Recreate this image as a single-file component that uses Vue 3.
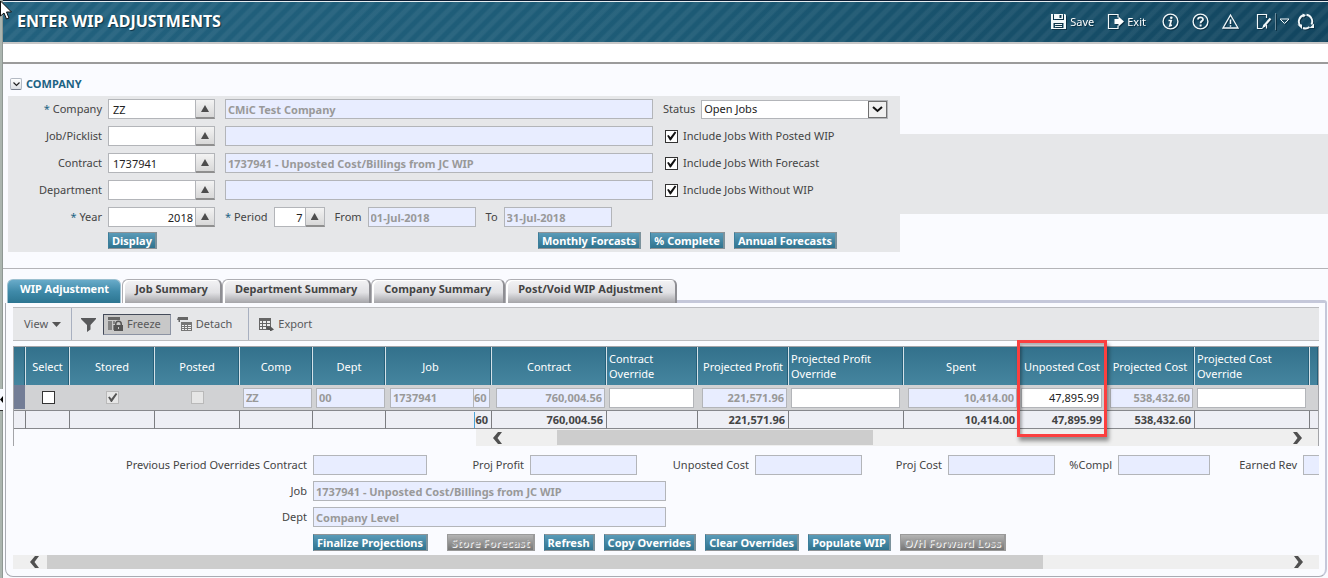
<script setup>
import { ref } from 'vue'

const lookups = [
  { id: 'company', label: 'Company', required: true, value: 'ZZ', text: 'CMiC Test Company' },
  { id: 'job', label: 'Job/Picklist', value: '', text: '' },
  { id: 'contract', label: 'Contract', value: '1737941', text: '1737941 - Unposted Cost/Billings from JC WIP' },
  { id: 'department', label: 'Department', value: '', text: '' },
]
const includes = ref([
  { label: 'Include Jobs With Posted WIP', on: true },
  { label: 'Include Jobs With Forecast', on: true },
  { label: 'Include Jobs Without WIP', on: true },
])
const status = ref('Open Jobs')
const forecastButtons = ['Monthly Forcasts', '% Complete', 'Annual Forecasts']
const tabs = ['WIP Adjustment', 'Job Summary', 'Department Summary', 'Company Summary', 'Post/Void WIP Adjustment']
const activeTab = ref(0)

const columns = [
  { kind: 'handle', title: '', width: 12 },
  { kind: 'check', title: 'Select', width: 44, on: false },
  { kind: 'check', title: 'Stored', width: 85, on: true, locked: true },
  { kind: 'check', title: 'Posted', width: 85, on: false, locked: true },
  { kind: 'text', title: 'Comp', width: 73, value: 'ZZ', locked: true },
  { kind: 'text', title: 'Dept', width: 73, value: '00', locked: true },
  { kind: 'split', title: 'Job', width: 106, value: '1737941', tail: '60', locked: true },
  { kind: 'num', title: 'Contract', width: 115, value: '760,004.56', total: '760,004.56', locked: true },
  { kind: 'num', title: 'Contract Override', width: 91, value: '', wrap: true },
  { kind: 'num', title: 'Projected Profit', width: 91, value: '221,571.96', total: '221,571.96', locked: true },
  { kind: 'num', title: 'Projected Profit Override', width: 115, value: '', wrap: true },
  { kind: 'num', title: 'Spent', width: 115, value: '10,414.00', total: '10,414.00', locked: true },
  { kind: 'num', title: 'Unposted Cost', width: 87, value: '47,895.99', total: '47,895.99', marked: true },
  { kind: 'num', title: 'Projected Cost', width: 89, value: '538,432.60', total: '538,432.60', locked: true },
  { kind: 'num', title: 'Projected Cost Override', width: 115, value: '', wrap: true },
  { kind: 'rest', title: '' },
]

const previous = [
  { id: 'contract', label: 'Previous Period Overrides Contract', lead: 294, width: 114 },
  { id: 'profit', label: 'Proj Profit', lead: 97, width: 107 },
  { id: 'unposted', label: 'Unposted Cost', lead: 112, width: 107 },
  { id: 'cost', label: 'Proj Cost', lead: 80, width: 107 },
  { id: 'compl', label: '%Compl', lead: 57, width: 92 },
  { id: 'rev', label: 'Earned Rev', lead: 87, width: 92 },
]
const actions = [
  { label: 'Finalize Projections', apart: true },
  { label: 'Store Forecast', disabled: true },
  { label: 'Refresh' },
  { label: 'Copy Overrides' },
  { label: 'Clear Overrides' },
  { label: 'Populate WIP' },
  { label: 'O/H Forward Loss', disabled: true },
]
</script>

<template>
  <div class="app">
    <aside class="rail">
      <button class="splitter" aria-label="Expand side panel">
        <svg width="3" height="7" viewBox="0 0 3 7"><path d="M3 0v7L0 3.500z" fill="#000" /></svg>
      </button>
    </aside>
    <div class="page">
      <header class="bar">
        <h1>ENTER WIP ADJUSTMENTS</h1>
        <nav class="tools">
          <button class="tool save">
            <svg width="17" height="17" viewBox="0 0 17 17" fill="#f2f8fa">
              <path fill-rule="evenodd" d="M1 1h2v6h11V1h1l1 1v14H1zM3.500 10v5h10v-5z" />
              <path fill-rule="evenodd" d="M4 1h9v5H4zM9.500 2v3h2V2z" />
              <path d="M5 11h7v1H5zM5 13h7v1H5z" />
            </svg>
            Save
          </button>
          <button class="tool exit">
            <svg width="17" height="17" viewBox="0 0 17 17">
              <path d="M11 4.500V1.500H1.500v14H11v-3" fill="none" stroke="#f2f8fa" stroke-width="1.200" />
              <path d="M7.500 6h4V3.500L17 8.500l-5.500 5V11h-4z" fill="#fff" />
            </svg>
            Exit
          </button>
          <button class="tool info" aria-label="Information">
            <svg width="17" height="17" viewBox="0 0 17 17" fill="none" stroke="#f2f8fa">
              <circle cx="8.500" cy="8.500" r="7.400" stroke-width="1.400" />
              <circle cx="9.300" cy="4.700" r="1.300" fill="#f2f8fa" stroke="none" />
              <path d="M6.500 7.500h2.700l-1.400 5.200 2.200-.6" stroke-width="1.700" />
            </svg>
          </button>
          <button class="tool help" aria-label="Help">
            <svg width="17" height="17" viewBox="0 0 17 17" fill="none" stroke="#f2f8fa">
              <circle cx="8.500" cy="8.500" r="7.400" stroke-width="1.400" />
              <path d="M6 6.500C6 3.700 11 3.700 11 6.400 11 8.200 8.600 8 8.600 10.300" stroke-width="1.800" />
              <path d="M7.600 11.500h2v2h-2z" fill="#f2f8fa" stroke="none" />
            </svg>
          </button>
          <button class="tool warn" aria-label="Warnings">
            <svg width="17" height="17" viewBox="0 0 17 17" fill="none" stroke="#f2f8fa">
              <path d="M8.500 2 16 15H1z" stroke-width="1.300" />
              <path d="M8.500 6.500v4.500M8.500 12.200v1.500" stroke-width="1.500" />
            </svg>
          </button>
          <button class="tool edit" aria-label="Edit">
            <svg width="17" height="17" viewBox="0 0 17 17" fill="none" stroke="#f2f8fa">
              <path d="M11.500 5V1.500h-9v14h5M11.500 12v3.500" stroke-width="1.200" />
              <path d="M15.500 5.500 9 13" stroke-width="2.200" />
              <path d="m8.500 11.500-1.500 4 3.500-2z" fill="#f2f8fa" stroke="none" />
            </svg>
          </button>
          <button class="tool more" aria-label="More edit options">
            <svg width="11" height="7" viewBox="0 0 11 7"><path d="M1 1h9L5.500 5.500z" fill="none" stroke="#f2f8fa" /></svg>
          </button>
          <button class="tool refresh" aria-label="Refresh page">
            <svg width="17" height="17" viewBox="0 0 17 17" fill="none" stroke="#f2f8fa" stroke-width="1.900">
              <path d="M3.500 13A6.800 6.800 0 0 1 7 2M9.500 1.800A6.800 6.800 0 0 1 14.500 11.500M12.500 14A6.800 6.800 0 0 1 6 15" />
              <path d="M.5 11.500H5V16zM17 10.500v4.500h-4.500zM5.500.5 9 2 6.500 4.500z" fill="#f2f8fa" stroke="none" />
            </svg>
          </button>
        </nav>
      </header>
      <div class="subbar"></div>

      <section class="company">
        <h2>
          <button class="disclose" aria-label="Collapse company">
            <svg width="7" height="5" viewBox="0 0 7 5"><path d="m.5.5 3 3 3-3" fill="none" stroke="#222" stroke-width="1.200" /></svg>
          </button>
          COMPANY
        </h2>
        <div class="band">
          <form class="criteria" @submit.prevent>
            <div class="lines">
              <div v-for="(row, i) in lookups" :key="row.id" class="line">
                <label :for="row.id"><i v-if="row.required">*</i> {{ row.label }}</label>
                <div class="picker">
                  <input :id="row.id" type="text" :value="row.value" />
                  <button type="button" :aria-label="'Look up ' + row.label"></button>
                </div>
                <input class="shown" type="text" readonly :value="row.text" :aria-label="row.label + ' name'" />
                <div v-if="i === 0" class="status">
                  <label for="status">Status</label>
                  <div class="drop">
                    <select id="status" v-model="status">
                      <option>Open Jobs</option>
                      <option>All Jobs</option>
                    </select>
                    <span class="arrow">
                      <svg width="11" height="7" viewBox="0 0 11 7"><path d="m1 1 4.500 4L10 1" fill="none" stroke="#111" stroke-width="2" /></svg>
                    </span>
                  </div>
                </div>
                <label v-else class="include">
                  <input v-model="includes[i - 1].on" type="checkbox" />{{ includes[i - 1].label }}
                </label>
              </div>
              <div class="line">
                <label for="year"><i>*</i> Year</label>
                <div class="picker right">
                  <input id="year" type="text" value="2018" />
                  <button type="button" aria-label="Look up Year"></button>
                </div>
                <div class="dates">
                  <label for="period"><i>*</i> Period</label>
                  <div class="picker short right">
                    <input id="period" type="text" value="7" />
                    <button type="button" aria-label="Look up Period"></button>
                  </div>
                  <label for="from" class="gap">From</label>
                  <input id="from" class="shown date" type="text" readonly value="01-Jul-2018" />
                  <label for="to" class="gap">To</label>
                  <input id="to" class="shown date" type="text" readonly value="31-Jul-2018" />
                </div>
              </div>
            </div>
            <div class="buttons">
              <button type="button" class="btn">Display</button>
              <div class="group">
                <button v-for="b in forecastButtons" :key="b" type="button" class="btn">{{ b }}</button>
              </div>
            </div>
          </form>
          <div class="wing"></div>
        </div>
      </section>

      <section class="work">
        <div class="tabs" role="tablist">
          <button
            v-for="(tab, i) in tabs"
            :key="tab"
            role="tab"
            :aria-selected="i === activeTab"
            :class="['tab', { active: i === activeTab }]"
            @click="activeTab = i"
          >{{ tab }}</button>
          <div class="edge"></div>
        </div>
        <div class="panel">
          <div class="toolbar">
            <button class="item view">
              View
              <svg width="9" height="5" viewBox="0 0 9 5"><path d="M0 0h9L4.500 5z" fill="#555" /></svg>
            </button>
            <div class="set">
              <button class="item filter" aria-label="Filter">
                <svg width="15" height="15" viewBox="0 0 15 15"><path d="M0 1h15v1L9.500 8v4.500L6 15V8L0 2z" fill="#58595b" /></svg>
              </button>
              <button class="item freeze" aria-pressed="true">
                <svg width="15" height="14" viewBox="0 0 15 14" fill="#666">
                  <path d="M0 0h12v3H0z" />
                  <path d="M0 4h4v9H0zM5 4h2v3H5zM8 4h3v1H8zM5 8h1v5H5z" opacity=".7" />
                  <path fill-rule="evenodd" d="M7 8V7a3.500 3.500 0 0 1 7 0v1h1v6H6V8zm1.500 0h4V7a2 2 0 0 0-4 0zM10 10v2h1v-2z" fill="#555" />
                </svg>
                Freeze
              </button>
              <button class="item detach">
                <svg width="15" height="14" viewBox="0 0 15 14">
                  <path d="M1 0h10v3H3v2H1.500V3H0z" fill="#666" />
                  <path d="M4 5h11v9H4z" fill="#777" />
                  <path d="M5 8h2v1H5zM8 8h2v1H8zM11 8h3v1h-3zM5 10h2v1H5zM8 10h2v1H8zM11 10h3v1h-3zM5 12h2v1H5zM8 12h2v1H8zM11 12h3v1h-3z" fill="#f3f3f3" />
                </svg>
                Detach
              </button>
            </div>
            <button class="item export">
              <svg width="15" height="13" viewBox="0 0 15 13">
                <path d="M0 0h12v12H0z" fill="#666" />
                <path d="M1 3h2v2H1zM4 3h3v2H4zM8 3h3v2H8zM1 6h2v2H1zM4 6h3v2H4zM8 6h3v2H8zM1 9h2v2H1zM4 9h3v2H4z" fill="#eee" />
                <path d="M7 7q1 3 4 3V8l4 3.500-4 2V12Q7 12 7 7" fill="#555" />
              </svg>
              Export
            </button>
          </div>

          <div class="grid">
            <table>
              <colgroup>
                <col v-for="(c, i) in columns" :key="i" :style="{ width: c.width ? c.width + 'px' : 'auto' }" />
              </colgroup>
              <thead>
                <tr>
                  <th v-for="(c, i) in columns" :key="i" :class="[c.kind, { wrap: c.wrap, marked: c.marked }]">
                    {{ c.title }}<span v-if="c.marked" class="callout"></span>
                  </th>
                </tr>
              </thead>
              <tbody>
                <tr>
                  <td v-for="(c, i) in columns" :key="i" :class="[c.kind, { locked: c.locked }]">
                    <input v-if="c.kind === 'check'" type="checkbox" :checked="c.on" :disabled="c.locked" :aria-label="c.title" />
                    <div v-else-if="c.kind === 'split'" class="pair">
                      <input class="shown" type="text" readonly :value="c.value" :aria-label="c.title" />
                      <input class="shown tail" type="text" readonly :value="c.tail" aria-label="Amount" />
                    </div>
                    <input
                      v-else-if="c.kind === 'text' || c.kind === 'num'"
                      type="text"
                      :class="{ shown: c.locked }"
                      :readonly="c.locked"
                      :value="c.value"
                      :aria-label="c.title"
                    />
                  </td>
                </tr>
              </tbody>
              <tfoot>
                <tr>
                  <td v-for="(c, i) in columns" :key="i"><span v-if="c.tail" class="cut">{{ c.tail }}</span>{{ c.total }}</td>
                </tr>
              </tfoot>
            </table>
            <div class="scroll inner">
              <svg width="10" height="12" viewBox="0 0 10 12"><path d="M5 0h4L4.500 6 9 12H5L0 6z" fill="#505050" /></svg>
              <div class="track"><div class="thumb"></div></div>
              <svg width="10" height="12" viewBox="0 0 10 12"><path d="M5 0H1l4.500 6L1 12h4l5-6z" fill="#505050" /></svg>
            </div>
          </div>

          <form class="details" @submit.prevent>
            <div class="fields">
              <template v-for="f in previous" :key="f.id">
                <label :for="'prev-' + f.id" :style="{ width: f.lead + 'px' }">{{ f.label }}</label>
                <input :id="'prev-' + f.id" class="shown" type="text" readonly :style="{ width: f.width + 'px' }" />
              </template>
            </div>
            <div class="fields">
              <label for="d-job" class="lead">Job</label>
              <input id="d-job" class="shown long" type="text" readonly value="1737941 - Unposted Cost/Billings from JC WIP" />
            </div>
            <div class="fields">
              <label for="d-dept" class="lead">Dept</label>
              <input id="d-dept" class="shown long" type="text" readonly value="Company Level" />
            </div>
            <div class="actions">
              <button v-for="a in actions" :key="a.label" type="button" :class="['btn', { apart: a.apart }]" :disabled="a.disabled">{{ a.label }}</button>
            </div>
          </form>

          <div class="scroll outer">
            <svg width="10" height="12" viewBox="0 0 10 12"><path d="M5 0h4L4.500 6 9 12H5L0 6z" fill="#505050" /></svg>
            <div class="track"><div class="thumb"></div></div>
            <svg width="10" height="12" viewBox="0 0 10 12"><path d="M5 0H1l4.500 6L1 12h4l5-6z" fill="#505050" /></svg>
          </div>
        </div>
      </section>
    </div>
    <svg class="pointer" width="13" height="20" viewBox="0 0 13 20">
      <path d="M.5 1v15l3.500-3 2.500 6 2.500-1-2.500-6h5z" fill="#fff" stroke="#111" />
    </svg>
  </div>
</template>

<style>
body {
  margin: 0;
  background: #fafbff;
}
</style>

<style scoped>
.app {
  position: relative;
  display: flex;
  min-height: 100vh;
  overflow: hidden;
  background: #fafbff;
  color: #444;
  font: 11px/16px 'Noto Sans', 'Open Sans', sans-serif;
}
.app *,
.app *::before,
.app *::after {
  box-sizing: border-box;
}
button,
input,
select {
  margin: 0;
  padding: 0;
  border: 0;
  border-radius: 0;
  background: none;
  color: inherit;
  font: inherit;
}
.rail {
  flex: none;
  width: 3px;
  padding-top: 389px;
  background: #abb5af;
  border-right: 1px solid #8f9894;
}
.splitter {
  display: flex;
  align-items: center;
  width: 3px;
  height: 22px;
  background: #f7f9ff;
  border-bottom: 1px solid #333;
}
.pointer {
  position: absolute;
  top: 0;
  left: 0;
}
.page {
  flex: 1;
  min-width: 0;
}
.bar {
  display: flex;
  align-items: center;
  justify-content: space-between;
  height: 44px;
  padding: 0 14px;
  border-top: 1px solid #0b1c33;
  border-bottom: 2px solid #c6c6c6;
  box-shadow: inset 0 1px #e5edf1;
  background:
    repeating-linear-gradient(135deg, rgba(255, 255, 255, 0.06) 0 3px, rgba(255, 255, 255, 0) 5px 8px, rgba(255, 255, 255, 0.06) 10px),
    linear-gradient(90deg, #22617e, #1d5b76 50%, #12455f);
  color: #fff;
}
h1 {
  margin: 0;
  font-size: 16px;
  line-height: 20px;
  padding-bottom: 2px;
  text-shadow: 1px 1px 1px #0d3346;
}
.tools {
  display: flex;
  align-items: center;
}
.tool {
  display: flex;
  align-items: center;
  gap: 3px;
  filter: drop-shadow(1px 1px 0 #0c3145);
}
.exit {
  margin-left: 13px;
}
.info {
  margin-left: 16px;
}
.help,
.warn {
  margin-left: 13px;
}
.edit {
  margin-left: 16px;
  padding-right: 3px;
  border-right: 1px solid #6d8c9b;
}
.more {
  margin: 0 7px 0 3px;
}
.subbar {
  height: 20px;
  background: #fff;
  border-bottom: 2px solid #9b9b9b;
}
.company {
  padding: 12px 0 16px 5px;
  border-bottom: 1px solid #b4b4b8;
}
h2 {
  display: flex;
  align-items: center;
  gap: 4px;
  margin: 0;
  padding: 0 0 4px 2px;
  color: #1d6384;
  font-size: 11px;
  line-height: 16px;
}
.disclose {
  display: flex;
  align-items: center;
  justify-content: center;
  width: 12px;
  height: 12px;
  background: linear-gradient(#fff, #dcdfe4);
  border: 1px solid #b4bac4;
  border-radius: 2px;
  border-bottom-color: #777e8c;
}
.band {
  display: flex;
}
.criteria {
  flex: 0 1 892px;
  padding: 3px 0;
  background: #e6e7e9;
}
.lines {
  display: flex;
  flex-direction: column;
  gap: 7px;
}
.wing {
  flex: 1;
  margin: 38px 0;
  background: #e6e7e9;
}
.line {
  display: grid;
  grid-template-columns: 94px 123px minmax(0, 1fr) 247px;
  align-items: center;
  height: 20px;
}
.line > label:first-child {
  text-align: right;
}
.line i {
  color: #1d6384;
  font-style: normal;
}
input[type='text'] {
  height: 20px;
  padding: 0 4px;
  background: #fff;
  border: 1px solid #b3b5b9;
  color: #222;
}
input.shown {
  padding: 0 2px;
  background: #e8edff;
  color: #999;
  font-weight: bold;
}
.picker {
  display: flex;
  width: 107px;
  margin-left: 6px;
}
.picker input {
  flex: 1;
  min-width: 0;
}
.picker.right input {
  padding-right: 2px;
  text-align: right;
}
.picker.short {
  width: 51px;
}
.picker button {
  display: flex;
  align-items: center;
  justify-content: center;
  width: 19px;
  height: 20px;
  background: linear-gradient(#f3f3f3, #d8d8d8);
  border: 1px solid #b3b5b9;
  border-left: 0;
  border-bottom: 2px solid #8f8f8f;
}
.picker button::before {
  width: 8px;
  height: 7px;
  background: #4d4d4d;
  clip-path: polygon(50% 0, 100% 100%, 0 100%);
  content: '';
}
.status,
.include {
  display: flex;
  align-items: center;
}
.status {
  gap: 6px;
  padding-left: 10px;
}
.drop {
  position: relative;
  width: 187px;
}
select {
  width: 100%;
  height: 19px;
  padding: 0 22px 0 2px;
  appearance: none;
  background: #fff;
  border: 1px solid #b3b5b9;
  color: #222;
  display: block;
}
.arrow {
  position: absolute;
  top: 1px;
  right: 1px;
  display: flex;
  align-items: center;
  justify-content: center;
  width: 19px;
  height: 17px;
  background: #f0f0f0;
  border: 1px solid #707070;
  pointer-events: none;
}
.include {
  gap: 5px;
  padding-left: 12px;
}
input[type='checkbox'] {
  display: inline-block;
  width: 13px;
  height: 13px;
  appearance: none;
  background: #fff;
  border: 1px solid #333;
}
input[type='checkbox']:checked::before {
  display: block;
  width: 11px;
  height: 11px;
  background: #111;
  clip-path: polygon(10% 48%, 24% 40%, 40% 62%, 80% 10%, 94% 18%, 44% 92%, 36% 92%);
  content: '';
}
input[type='checkbox']:disabled {
  background: #e6e6e6;
  border-color: #b9b9b9;
}
input[type='checkbox']:disabled::before {
  background: #555;
}
.dates {
  grid-column: 3 / 5;
  display: flex;
  align-items: center;
}
.gap {
  margin: 0 6px 0 10px;
}
.date {
  width: 108px;
}
.btn {
  height: 17px;
  padding: 0 3px;
  background: linear-gradient(#5a9bb8, #2f738f);
  border: 1px solid #8f9396;
  border-left-color: #3b7e9b;
  border-right: 2px solid #7b929c;
  color: #fff;
  font-weight: bold;
  line-height: 15px;
  white-space: nowrap;
}
.btn:disabled {
  background: linear-gradient(#b4b4b4, #767676);
  border-color: #9a9a9a;
  color: #9b9b9b;
  text-shadow: 1px 1px 0 #eee;
}
.buttons {
  display: flex;
  justify-content: space-between;
  padding: 5px 63px 0 100px;
}
.group {
  display: flex;
  gap: 9px;
}
.work {
  padding: 10px 1px 0 2px;
}
.tabs {
  display: flex;
  height: 24px;
}
.tab {
  height: 24px;
  padding: 0 12px 5px;
  background: linear-gradient(#f3f3f5, #e1e1e4 55%, #a5a5a9);
  border: 1px solid #aeaeb3;
  border-bottom: 0;
  border-right: 2px solid #8e8e93;
  border-radius: 6px 6px 0 0;
  box-shadow: inset 2px 1px #fff;
  color: #444;
  font-weight: bold;
  white-space: nowrap;
}
.tab.active {
  margin: 0 1px 0 2px;
  padding: 0 11px 5px 12px;
  background: linear-gradient(#69abc9, #3f8aa9 50%, #2c7591);
  border: 1px solid #9cc0d0;
  border-bottom: 0;
  box-shadow: none;
  color: #fff;
}
.edge {
  flex: 1;
  align-self: flex-end;
  height: 3px;
  background: #c5c8da;
  border-radius: 0 6px 0 0;
}
.panel {
  padding: 4px 6px 7px 7px;
  border: 1px solid #a9abb3;
  border-top: 0;
  border-right: 2px solid #c5c8da;
  border-radius: 0 0 8px 8px;
}
.toolbar {
  display: flex;
  height: 34px;
  background: #e6e7e9;
  border: solid #bbbcbf;
  border-width: 1px 0;
  color: #58595b;
}
.item {
  display: flex;
  align-items: center;
  gap: 4px;
}
.view {
  padding: 0 10px 0 11px;
}
.set {
  display: flex;
  align-items: center;
  padding: 0 16px 0 9px;
  border: solid #a8b0c0;
  border-width: 0 1px;
}
.freeze {
  height: 21px;
  margin: 0 6px 0 7px;
  padding: 0 9px 0 4px;
  background: #c8c8c8;
  border: 1px solid #8c93a3;
  border-top-color: #444b5a;
  border-left-color: #444b5a;
}
.export {
  padding-left: 10px;
}
.grid {
  margin-top: 5px;
  border: solid #a3a4a8;
  border-width: 1px 1px 0;
}
table {
  width: 100%;
  border-spacing: 0;
  table-layout: fixed;
}
th {
  height: 38px;
  padding: 0;
  background: linear-gradient(#33718c, #45859f);
  border-right: 1px solid #d4e2e9;
  box-shadow: inset -1px 0 #245f79;
  color: #fff;
  font-weight: normal;
  line-height: 15px;
}
th.split {
  padding-right: 16px;
}
th.wrap {
  padding: 0 20px 0 2px;
  text-align: left;
}
th:last-child,
td:last-child {
  border-right: 0;
}
th.marked {
  position: relative;
}
.callout {
  position: absolute;
  top: -7px;
  left: -2px;
  z-index: 1;
  width: 90px;
  height: 97px;
  border: 3px solid #fb3f3f;
  box-shadow: 2px 4px 4px rgba(0, 0, 0, 0.4), inset 2px 3px 3px rgba(0, 0, 0, 0.3);
  pointer-events: none;
}
tbody td {
  height: 26px;
  padding: 0 4px 0 2px;
  background: #d1d2d4;
  border-bottom: 1px solid #87888c;
}
tbody td.locked {
  padding: 0 2px 0 4px;
}
tbody td.handle {
  background: linear-gradient(#737d96, #737d96) no-repeat 0 0 / 11px 24px #d1d2d4;
}
tbody td.check {
  padding: 0;
  text-align: center;
  line-height: 1px;
}
tbody input[type='text'] {
  display: block;
  width: 100%;
  padding: 0 2px;
}
tbody td.text {
  padding: 0 1px 0 3px;
}
td.num input {
  text-align: right;
}
.pair {
  display: flex;
}
.app .pair .tail {
  flex: none;
  width: 16px;
  padding: 0;
  border-left: 0;
}
.pair input:first-child {
  flex: 1;
  min-width: 0;
}
tfoot td {
  height: 18px;
  padding: 0 3px 0 2px;
  background: #eeeff5;
  border-right: 1px solid #7c7d81;
  border-bottom: 1px solid #87888c;
  font-weight: bold;
  line-height: 16px;
  text-align: right;
}
.cut {
  display: inline-block;
  border-left: 1px solid #4ba3d8;
}
.scroll {
  display: flex;
  align-items: center;
  background: #efefef;
}
.scroll svg {
  flex: none;
}
.track {
  flex: 1;
  align-self: stretch;
}
.thumb {
  height: 100%;
  background: #cdcdcd;
}
.inner {
  height: 17px;
  margin-left: 462px;
  padding: 0 16px 0 17px;
}
.inner .thumb {
  width: 40%;
  height: 15px;
  margin: 1px 0 0 54px;
}
.outer {
  height: 14px;
  padding: 0 16px 0 17px;
}
.outer .thumb {
  width: 79.5%;
  margin-left: 7px;
}
.details {
  display: flex;
  flex-direction: column;
  gap: 6px;
  padding: 9px 0 4px;
  overflow: hidden;
}
.fields {
  display: flex;
  align-items: center;
  gap: 6px;
  height: 20px;
}
.fields label {
  flex: none;
  margin-left: -6px;
  text-align: right;
  white-space: nowrap;
}
.fields label:first-child {
  margin-left: 0;
}
.fields input {
  flex: none;
}
.fields .lead {
  width: 294px;
}
.fields .long {
  width: 353px;
}
.actions {
  display: flex;
  gap: 9px;
  padding: 1px 0 0 300px;
}
.apart {
  margin-right: 10px;
}
</style>
